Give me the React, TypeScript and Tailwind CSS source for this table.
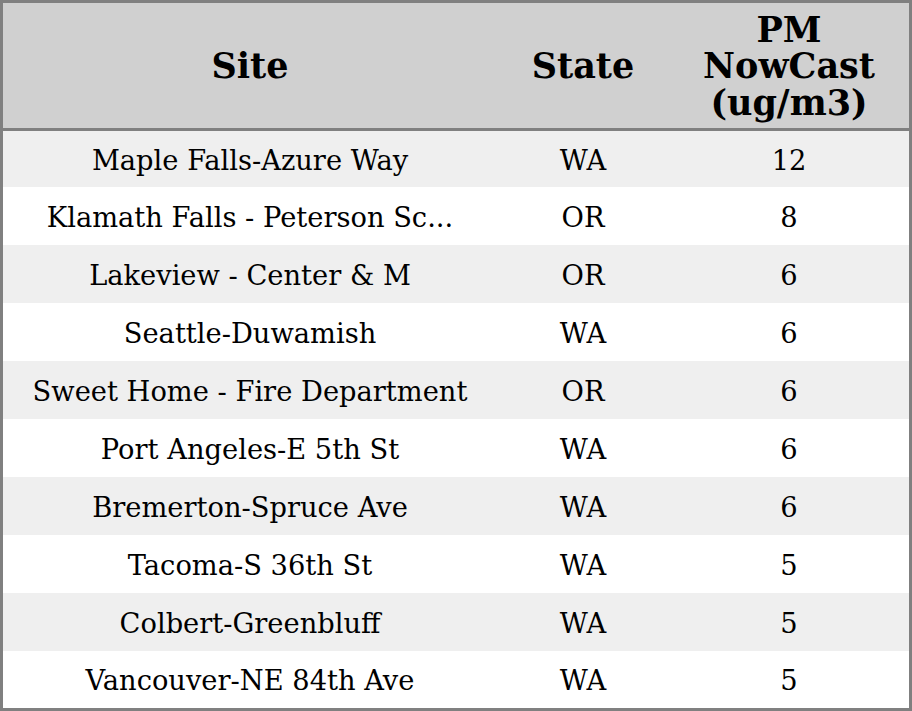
const rows: [string, string, number][] = [
  ["Maple Falls-Azure Way", "WA", 12],
  ["Klamath Falls - Peterson Sc...", "OR", 8],
  ["Lakeview - Center & M", "OR", 6],
  ["Seattle-Duwamish", "WA", 6],
  ["Sweet Home - Fire Department", "OR", 6],
  ["Port Angeles-E 5th St", "WA", 6],
  ["Bremerton-Spruce Ave", "WA", 6],
  ["Tacoma-S 36th St", "WA", 5],
  ["Colbert-Greenbluff", "WA", 5],
  ["Vancouver-NE 84th Ave", "WA", 5],
];

// row heights as measured: first a bit shorter, last a bit shorter
const heights = [56, 58, 58, 58, 58, 58, 58, 58, 58, 57];

export default function App() {
  return (
    <div
      className="w-[912px] h-[711px] bg-white border-[3px] border-[#808080] flex flex-col text-black"
      style={{ fontFamily: '"DejaVu Serif", serif' }}
    >
      <div className="grid grid-cols-[494px_172px_1fr] h-[128px] shrink-0 pt-[2px] bg-[#d0d0d0] border-b-[3px] border-[#808080] font-bold text-[35px] leading-[36.5px]">
        <div className="flex items-center justify-center text-center">Site</div>
        <div className="flex items-center justify-center text-center">State</div>
        <div className="flex items-center justify-center text-center">
          PM
          <br />
          NowCast
          <br />
          (ug/m3)
        </div>
      </div>
      <div className="flex flex-col">
        {rows.map(([site, state, value], i) => (
          <div
            key={site}
            style={{ height: heights[i] }}
            className={`grid grid-cols-[494px_172px_1fr] items-center text-center text-[27.3px] ${
              i === 9 ? "pt-[3px]" : "pt-[5px]"
            } ${i % 2 === 0 ? "bg-[#efefef]" : "bg-white"}`}
          >
            <div className="whitespace-nowrap">{site}</div>
            <div>{state}</div>
            <div>{value}</div>
          </div>
        ))}
      </div>
    </div>
  );
}
